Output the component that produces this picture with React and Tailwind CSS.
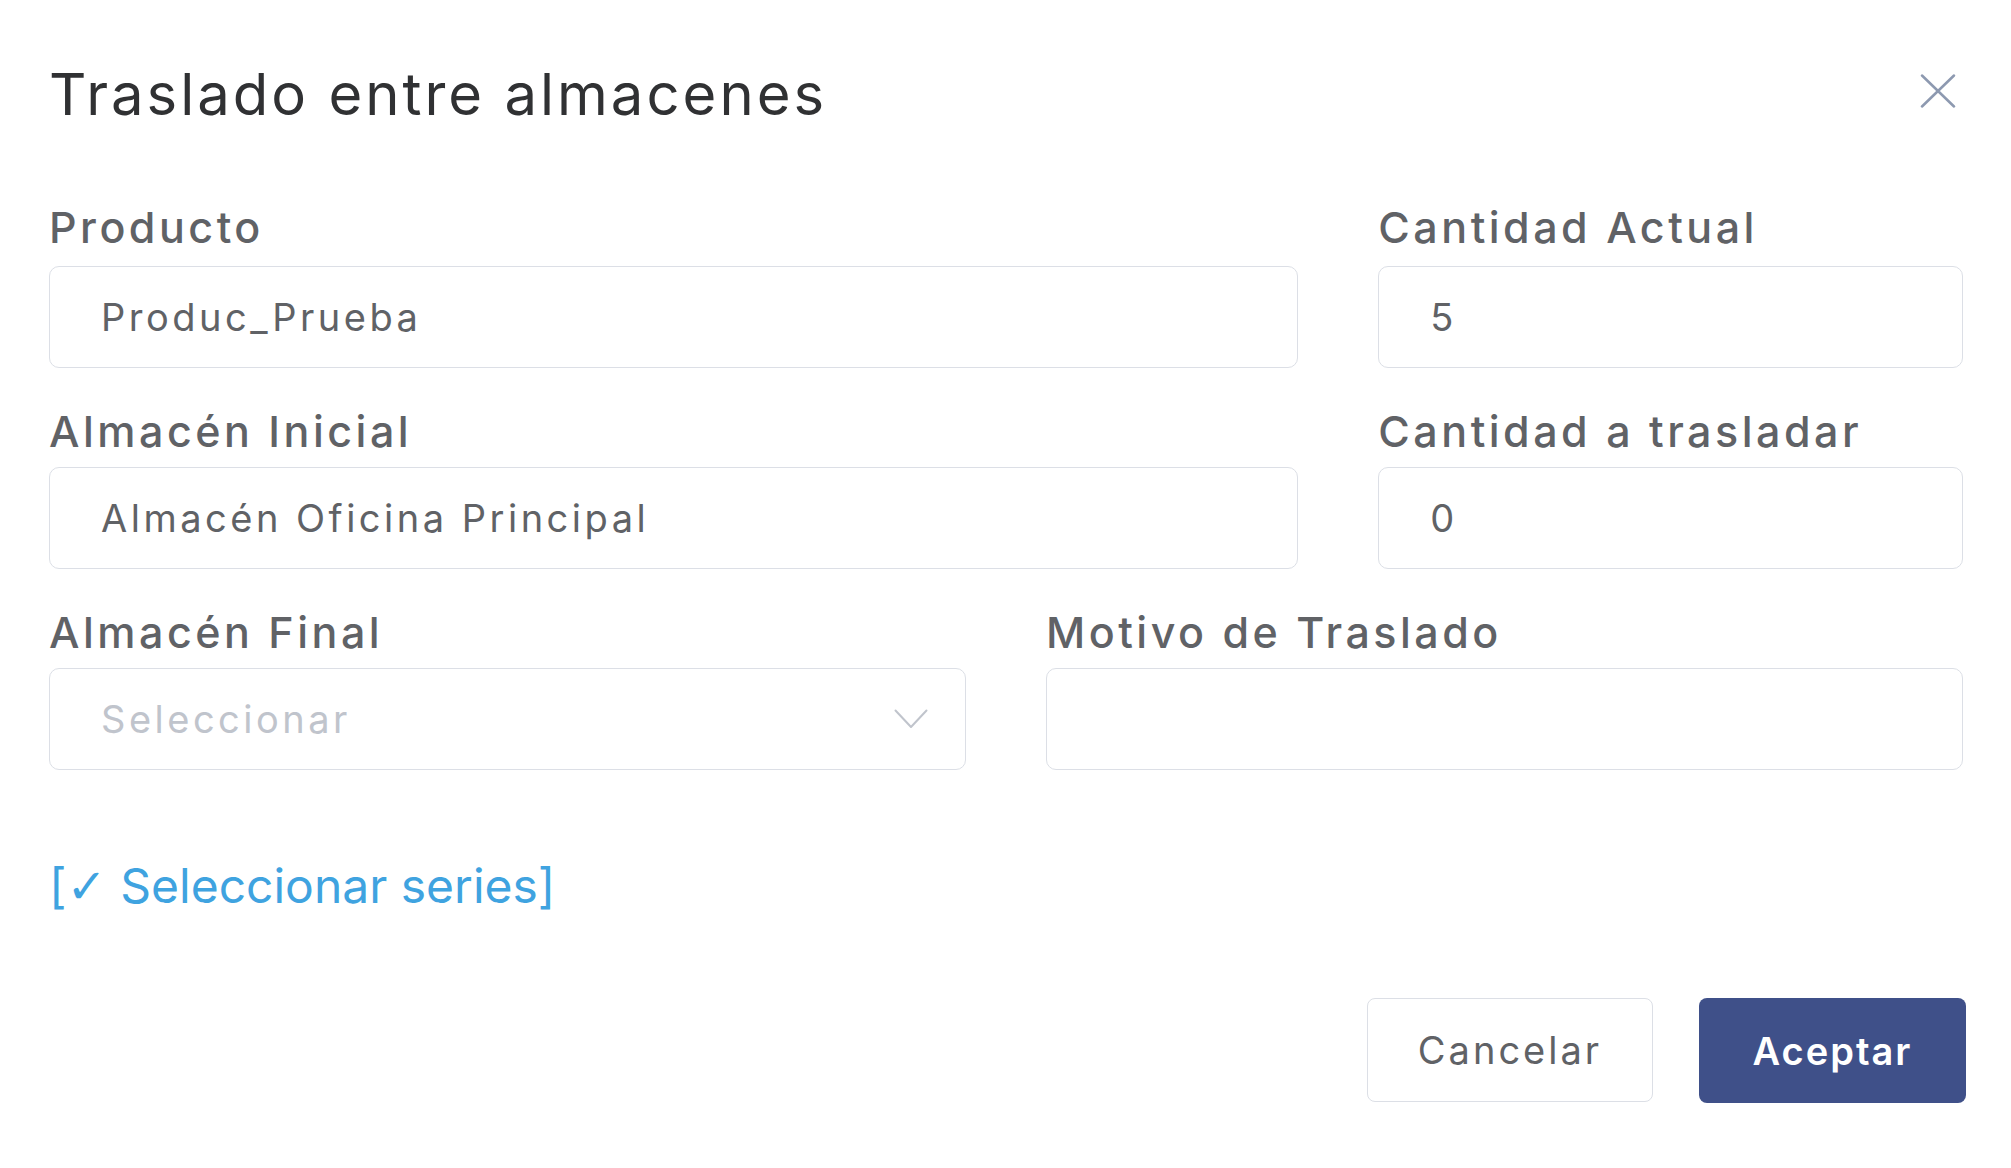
import React from "react"

const font = { fontFamily: "Inter, 'Noto Sans', sans-serif" }

function Field({ label, value, placeholder, select, gap = "mt-[14px]" }) {
    return (
        <div className="flex flex-col">
            <label className="text-[43px] leading-none font-medium text-[#606266] h-[43px] tracking-[3.5px]">{label}</label>
            <div className={`${gap} h-[102px] border border-[#dcdfe6] rounded-[10px] flex items-center pl-[51px] pr-[37px]`}>
                <span className={`flex-1 text-[38px] leading-none tracking-[3.5px] ${value ? "text-[#606266]" : "text-[#c0c4cc]"}`}>
                    {value || placeholder}
                </span>
                {select && (
                    <svg width="34" height="20" viewBox="0 0 34 20" fill="none" className="shrink-0">
                        <path d="M1.5 1.5 L17 18 L32.5 1.5" stroke="#c0c4cc" strokeWidth="2" strokeLinecap="round" strokeLinejoin="round" />
                    </svg>
                )}
            </div>
        </div>
    )
}

export default function App() {
    return (
        <div className="w-[2011px] h-[1168px] bg-white pl-[49px] pr-[48px] flex flex-col" style={font}>
            {/* Header */}
            <div className="mt-[65px] flex items-start justify-between">
                <h1 className="text-[58px] leading-none font-normal text-[#303133] h-[58px] tracking-[3px]">Traslado entre almacenes</h1>
                <button className="mt-[9px] mr-[7px]" title="Cerrar">
                    <svg width="36" height="34" viewBox="0 0 36 34" fill="none">
                        <path d="M2 1.5 L34 32.5 M34 1.5 L2 32.5" stroke="#8d99b0" strokeWidth="2.5" strokeLinecap="round" />
                    </svg>
                </button>
            </div>

            {/* Form */}
            <div className="mt-[83px] grid grid-cols-3 gap-x-[80px]">
                <div className="col-span-2">
                    <Field label="Producto" value="Produc_Prueba" gap="mt-[17px]" />
                </div>
                <Field label="Cantidad Actual" value="5" gap="mt-[17px]" />
            </div>

            <div className="mt-[42px] grid grid-cols-3 gap-x-[80px]">
                <div className="col-span-2">
                    <Field label="Almacén Inicial" value="Almacén Oficina Principal" />
                </div>
                <Field label="Cantidad a trasladar" value="0" />
            </div>

            <div className="mt-[42px] grid grid-cols-2 gap-x-[80px]">
                <Field label="Almacén Final" placeholder="Seleccionar" select />
                <Field label="Motivo de Traslado" value="" placeholder="" />
            </div>

            <div className="mt-[92px]">
                <a className="text-[48px] leading-none text-[#3fa3e0] cursor-pointer">
                    [<span style={{ fontFamily: "'DejaVu Sans', sans-serif" }}>✓</span> Seleccionar series]
                </a>
            </div>

            {/* Footer */}
            <div className="mt-[88px] -mr-[3px] flex justify-end gap-[46px]">
                <button className="w-[286px] h-[104px] border border-[#dcdfe6] rounded-[8px] bg-white text-[38px] text-[#606266] leading-none tracking-[3px]">
                    Cancelar
                </button>
                <button className="w-[267px] h-[105px] rounded-[8px] bg-[#3f5089] text-[38px] text-white font-semibold leading-none tracking-[2px]">
                    Aceptar
                </button>
            </div>
        </div>
    )
}
